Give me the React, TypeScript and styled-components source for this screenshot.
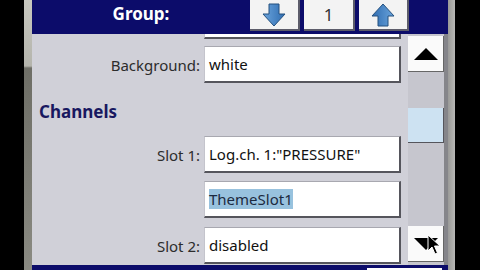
import React from 'react';
import styled, { createGlobalStyle } from 'styled-components';

const Global = createGlobalStyle`
  body {
    margin: 0;
    background: #000;
  }
  * {
    box-sizing: border-box;
  }
`;

const Device = styled.div`
  width: 480px;
  height: 270px;
  display: flex;
  background: #000;
  overflow: hidden;
  font-family: 'Noto Sans', 'DejaVu Sans', sans-serif;
`;

const LeftBezel = styled.div`
  width: 8px;
  margin-left: 24px;
  background: linear-gradient(
    to bottom,
    #c8c8c0 0,
    #b4b4ac 66px,
    #6e6e66 68px,
    #8a8a82 270px
  );
`;

const RightBezel = styled.div`
  width: 7px;
  background: linear-gradient(to right, #9a9a98, #b8b8b6);
`;

const Screen = styled.div`
  width: 416px;
  display: flex;
  flex-direction: column;
  position: relative;
`;

const Header = styled.div`
  height: 34px;
  background: #0c0c6a;
  display: flex;
  align-items: flex-start;
`;

const Title = styled.div`
  width: 218px;
  text-align: center;
  color: #fff;
  font-weight: 700;
  font-size: 17px;
  line-height: 28px;
`;

const HeaderButton = styled.div<{ $w: number }>`
  width: ${({ $w }) => $w}px;
  height: 31px;
  margin-right: 4px;
  background: #f3f3f3;
  border-right: 2px solid #5c5c6a;
  border-bottom: 2px solid #5c5c6a;
  display: flex;
  align-items: center;
  justify-content: center;
  color: #333;
  font-size: 17px;
`;

const Body = styled.div`
  flex: 1;
  display: flex;
  min-height: 0;
`;

const Form = styled.div`
  width: 376px;
  background: #d0d0d8;
  overflow: hidden;
`;

const FormInner = styled.div`
  margin-top: -32px;
  display: flex;
  flex-direction: column;
`;

const Row = styled.div<{ $gap?: number }>`
  display: grid;
  grid-template-columns: 168px 197px;
  column-gap: 4px;
  align-items: center;
  height: 37px;
  margin-bottom: ${({ $gap }) => $gap ?? 8}px;
`;

const Label = styled.div`
  text-align: right;
  color: #2c2c2c;
  font-size: 15px;
`;

const Field = styled.div`
  height: 37px;
  background: #fff;
  border-top: 1px solid #a8a8b0;
  border-left: 1px solid #c4c4cc;
  border-right: 2px solid #55555c;
  border-bottom: 2px solid #55555c;
  padding-left: 4px;
  display: flex;
  align-items: center;
  color: #111;
  font-size: 15px;
  white-space: nowrap;
`;

const Selected = styled.span`
  background: #98c2de;
  color: #1c2a40;
`;

const Section = styled.div`
  height: 26px;
  margin: 16px 0 11px 7px;
  color: #181860;
  font-weight: 700;
  font-size: 17px;
  line-height: 26px;
`;

const ScrollBar = styled.div`
  width: 40px;
  background: #c6c6ce;
  border-right: 4px solid #85858a;
  display: flex;
  flex-direction: column;
  padding-top: 2px;
`;

const ScrollButton = styled.div<{ $mt?: number }>`
  width: 36px;
  height: 36px;
  margin-top: ${({ $mt }) => $mt ?? 0}px;
  background: #fafafa;
  border-right: 1px solid #666;
  border-bottom: 1px solid #666;
  display: flex;
  align-items: center;
  justify-content: center;
`;

const Thumb = styled.div`
  width: 36px;
  height: 35px;
  margin-top: 36px;
  background: #cde2f2;
  border-right: 1px solid #55555c;
  border-bottom: 1px solid #55555c;
`;

const Footer = styled.div`
  height: 5px;
  background: #0c0c6a;
  display: flex;
  padding: 3px 0 0 335px;
`;

const FooterTab = styled.div`
  width: 75px;
  background: #fff;
`;

const Cursor = styled.svg`
  position: absolute;
  left: 395px;
  top: 234px;
`;

const ArrowIcon = ({ up }: { up?: boolean }) => (
  <svg width="24" height="24" viewBox="0 0 24 24" style={{ transform: up ? 'rotate(180deg)' : undefined }}>
    <defs>
      <linearGradient id={up ? 'gu' : 'gd'} x1="0" y1="0" x2="1" y2="0">
        <stop offset="0" stopColor="#6aa4dc" />
        <stop offset="1" stopColor="#2f6cb0" />
      </linearGradient>
    </defs>
    <path
      d="M7 1 H17 V11 H23 L12 23 L1 11 H7 Z"
      fill={`url(#${up ? 'gu' : 'gd'})`}
      stroke="#24507e"
      strokeWidth="1"
    />
  </svg>
);

const Triangle = ({ up }: { up?: boolean }) => (
  <svg width="26" height="14" viewBox="0 0 26 14">
    <path d={up ? 'M13 1 L25 13 H1 Z' : 'M1 1 H25 L13 13 Z'} fill="#000" />
  </svg>
);

const App: React.FC = () => (
  <>
    <Global />
    <Device>
      <LeftBezel />
      <Screen>
        <Header>
          <Title>Group:</Title>
          <HeaderButton $w={50}>
            <ArrowIcon />
          </HeaderButton>
          <HeaderButton $w={51}>1</HeaderButton>
          <HeaderButton $w={50}>
            <ArrowIcon up />
          </HeaderButton>
        </Header>
        <Body>
          <Form>
            <FormInner>
              <Row $gap={7}>
                <Label />
                <Field />
              </Row>
              <Row $gap={0}>
                <Label>Background:</Label>
                <Field>white</Field>
              </Row>
              <Section>Channels</Section>
              <Row>
                <Label>Slot 1:</Label>
                <Field>Log.ch. 1:"PRESSURE"</Field>
              </Row>
              <Row $gap={9}>
                <Label />
                <Field>
                  <Selected>ThemeSlot1</Selected>
                </Field>
              </Row>
              <Row>
                <Label>Slot 2:</Label>
                <Field>disabled</Field>
              </Row>
            </FormInner>
          </Form>
          <ScrollBar>
            <ScrollButton>
              <Triangle up />
            </ScrollButton>
            <Thumb />
            <ScrollButton $mt={83}>
              <Triangle />
            </ScrollButton>
          </ScrollBar>
        </Body>
        <Footer>
          <FooterTab />
        </Footer>
        <Cursor width="14" height="22" viewBox="0 0 14 22">
          <path
            d="M1 1 L1 17 L5 13 L8 20 L10.5 19 L7.5 12 L13 12 Z"
            fill="#000"
            stroke="#fff"
            strokeWidth="1"
          />
        </Cursor>
      </Screen>
      <RightBezel />
    </Device>
  </>
);

export default App;
